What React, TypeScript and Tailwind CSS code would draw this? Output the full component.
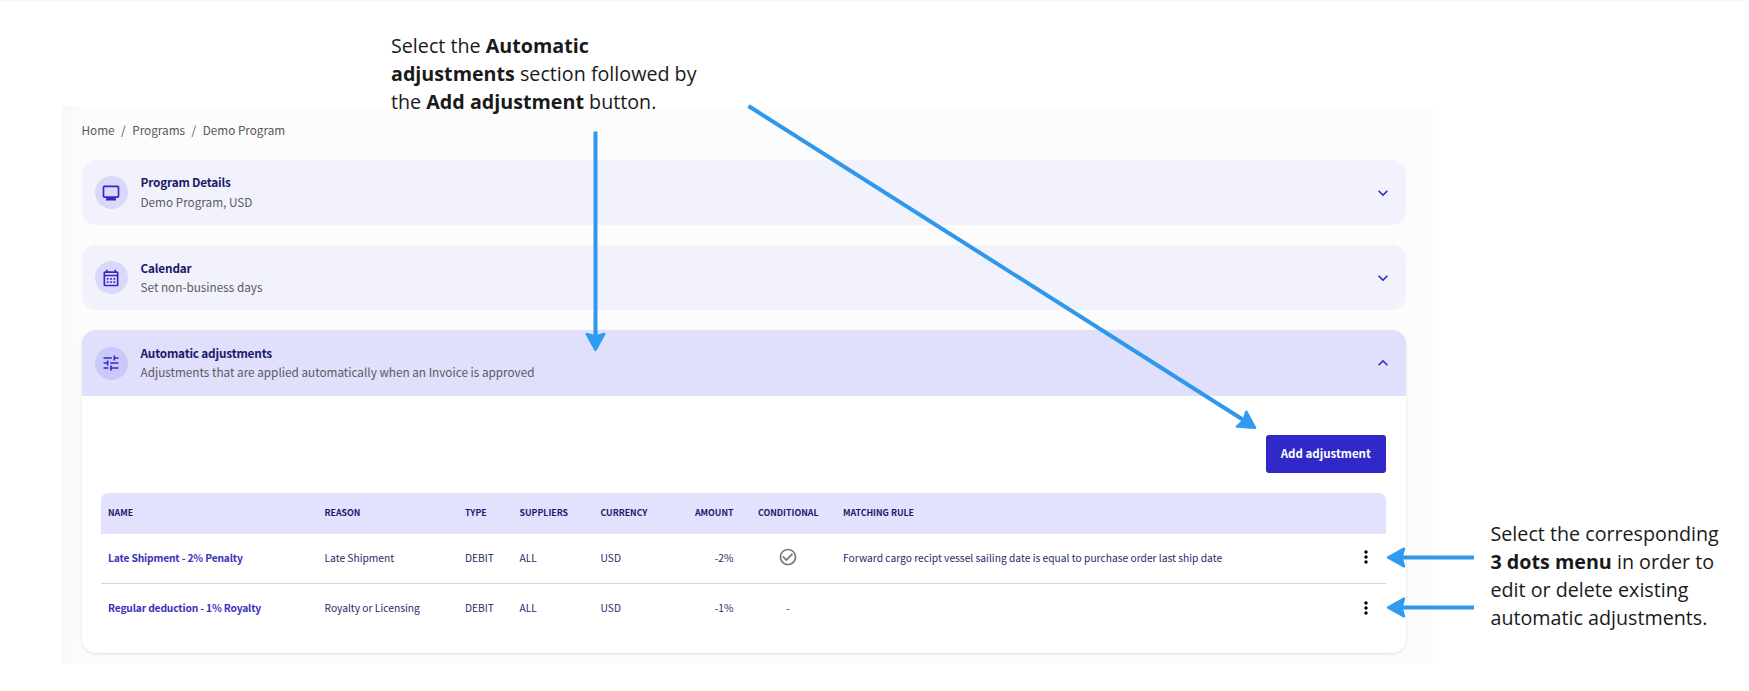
import type { ReactNode } from "react";
import clsx from "clsx";
import {
  MdCheckCircleOutline,
  MdExpandLess,
  MdExpandMore,
  MdMoreVert,
  MdOutlineCalendarMonth,
  MdOutlineMonitor,
  MdTune,
} from "react-icons/md";

interface Adjustment {
  name: string;
  reason: string;
  type: string;
  suppliers: string;
  currency: string;
  amount: string;
  conditional: boolean;
  rule: string;
}

const adjustments: Adjustment[] = [
  {
    name: "Late Shipment - 2% Penalty",
    reason: "Late Shipment",
    type: "DEBIT",
    suppliers: "ALL",
    currency: "USD",
    amount: "-2%",
    conditional: true,
    rule: "Forward cargo recipt vessel sailing date is equal to purchase order last ship date",
  },
  {
    name: "Regular deduction - 1% Royalty",
    reason: "Royalty or Licensing",
    type: "DEBIT",
    suppliers: "ALL",
    currency: "USD",
    amount: "-1%",
    conditional: false,
    rule: "",
  },
];

interface SectionHeaderProps {
  icon: ReactNode;
  title: string;
  subtitle: string;
  open?: boolean;
}

function SectionHeader({ icon, title, subtitle, open }: SectionHeaderProps) {
  return (
    <div
      className={clsx(
        "flex items-center px-[13px]",
        open ? "h-[65.6px] rounded-t-[14px] bg-[#e0dffc]" : "h-[65.2px] rounded-[14px] bg-[#f2f2fc]"
      )}
    >
      <div
        className={clsx(
          "flex size-[33px] items-center justify-center rounded-full text-[#352cc4]",
          open ? "bg-[#cbc8fb]" : "bg-[#dad8fb]"
        )}
      >
        {icon}
      </div>
      <div className="ml-[13px] flex-1 pb-[1.5px]">
        <div className="text-[11.8px] leading-[19.5px] font-bold tracking-[-0.19px] text-[#1c1a6b]">{title}</div>
        <div className="text-[11.75px] leading-[19.5px] text-[#5a5a62]">{subtitle}</div>
      </div>
      {open ? <MdExpandLess className="size-5 text-[#352cc4]" /> : <MdExpandMore className="size-5 text-[#352cc4]" />}
    </div>
  );
}

export default function App() {
  return (
    <div className="relative h-[691px] w-[1749px] overflow-hidden border-t border-[#f7f7f7] bg-white pt-[105px] font-['Noto_Sans_CJK_SC',sans-serif]">
      <main className="ml-[62px] h-[558px] w-[1371px] bg-gradient-to-r from-[#f7f7f7] to-[#fcfcfc] to-[20px] pl-[19.5px] pr-[27.5px]">
        <nav className="flex h-[54px] items-center gap-[6.5px] pb-[6px] text-[11.75px] text-[#55555c]">
          <span>Home</span>
          <span>/</span>
          <span>Programs</span>
          <span>/</span>
          <span>Demo Program</span>
        </nav>

        <div className="flex flex-col gap-5">
          <SectionHeader icon={<MdOutlineMonitor className="size-5" />} title="Program Details" subtitle="Demo Program, USD" />
          <SectionHeader icon={<MdOutlineCalendarMonth className="size-5" />} title="Calendar" subtitle="Set non-business days" />

          <section className="h-[322.6px] rounded-[14px] bg-white shadow-[0_1px_3px_rgba(0,0,0,0.12)]">
            <SectionHeader
              open
              icon={<MdTune className="size-5" />}
              title="Automatic adjustments"
              subtitle="Adjustments that are applied automatically when an Invoice is approved"
            />

            <div className="px-[19.5px] pt-[39px]">
              <div className="flex justify-end">
                <button className="h-[38px] w-[120.5px] rounded-[3px] bg-[#3029c8] text-[11.5px] font-bold text-white">
                  Add adjustment
                </button>
              </div>

              <table className="mt-5 w-[1285px] table-fixed border-separate border-spacing-0 text-left text-[10.25px] text-[#2b2968]">
                <colgroup>
                  <col className="w-[216.500px]" />
                  <col className="w-[140.500px]" />
                  <col className="w-[54.500px]" />
                  <col className="w-[81px]" />
                  <col className="w-[75px]" />
                  <col className="w-[65px]" />
                  <col className="w-[102.500px]" />
                  <col className="w-[510px]" />
                  <col className="w-[40px]" />
                </colgroup>
                <thead>
                  <tr className="h-[41px] text-[8.8px] text-[#1c1a6b] *:bg-[#e2e1fe] *:p-0 *:pb-px *:font-bold">
                    <th className="rounded-tl-[7px]"><span className="pl-[7px]">NAME</span></th>
                    <th><span className="pl-[7px]">REASON</span></th>
                    <th><span className="pl-[7px]">TYPE</span></th>
                    <th><span className="pl-[7px]">SUPPLIERS</span></th>
                    <th><span className="pl-[7px]">CURRENCY</span></th>
                    <th className="text-right">AMOUNT</th>
                    <th className="text-center"><span className="pl-[7px]">CONDITIONAL</span></th>
                    <th><span className="pl-[7px]">MATCHING RULE</span></th>
                    <th className="rounded-tr-[7px]" />
                  </tr>
                </thead>
                <tbody>
                  {adjustments.map((a) => (
                    <tr key={a.name} className="h-[50px] *:border-[#d3d2e8] *:p-0 *:pb-[2px] [&:not(:last-child)>td]:border-b">
                      <td className="font-bold tracking-[-0.16px] text-[#3a32bb]"><span className="pl-[7px]">{a.name}</span></td>
                      <td><span className="pl-[7px]">{a.reason}</span></td>
                      <td><span className="pl-[7px]">{a.type}</span></td>
                      <td><span className="pl-[7px]">{a.suppliers}</span></td>
                      <td><span className="pl-[7px]">{a.currency}</span></td>
                      <td className="text-right">{a.amount}</td>
                      <td>
                        <div className="flex justify-center pl-[6px]">
                          {a.conditional ? <MdCheckCircleOutline className="size-5 text-[#777]" /> : "-"}
                        </div>
                      </td>
                      <td><span className="pl-[7px]">{a.rule}</span></td>
                      <td>
                        <MdMoreVert className="ml-[10px] size-5 text-black" />
                      </td>
                    </tr>
                  ))}
                </tbody>
              </table>
            </div>
          </section>
        </div>
      </main>

      {/* Callouts */}
      <p className="absolute left-[391px] top-[31px] w-[320px] font-['Open_Sans',sans-serif] text-[19.7px] leading-[28px] text-[#1a1a1a]">
        Select the <b>Automatic</b>
        <br />
        <b>adjustments</b> section followed by
        <br />
        the <b>Add adjustment</b> button.
      </p>
      <p className="absolute left-[1490.5px] top-[519px] w-[250px] font-['Open_Sans',sans-serif] text-[19.7px] leading-[28px] text-[#1a1a1a]">
        Select the corresponding
        <br />
        <b>3 dots menu</b> in order to
        <br />
        edit or delete existing
        <br />
        automatic adjustments.
      </p>

      <svg className="absolute left-0 -top-px" width="1749" height="691" fill="none" stroke="#2f97ec" strokeWidth="4">
        <defs>
          <marker id="head" markerUnits="userSpaceOnUse" markerWidth="20" markerHeight="22" refX="18.5" refY="11" orient="auto">
            <path d="M18 11 2 2.200 4.500 11 2 19.800z" fill="#2f9bf2" stroke="#2f9bf2" strokeWidth="2.500" strokeLinejoin="round" />
          </marker>
        </defs>
        {/* Shafts stop inside the heads so the tips stay sharp */}
        <path d="M595.500 131.500V340" />
        <path d="M748.500 106 1247 422.300" />
        <path d="M1474 557.500H1397" />
        <path d="M1474 607.500H1397" />
        <g stroke="none">
          <path d="M595.500 131.500V350.500" markerEnd="url(#head)" />
          <path d="M748.500 106 1255.500 428" markerEnd="url(#head)" />
          <path d="M1474 557.500H1387.500" markerEnd="url(#head)" />
          <path d="M1474 607.500H1387.500" markerEnd="url(#head)" />
        </g>
      </svg>
    </div>
  );
}
